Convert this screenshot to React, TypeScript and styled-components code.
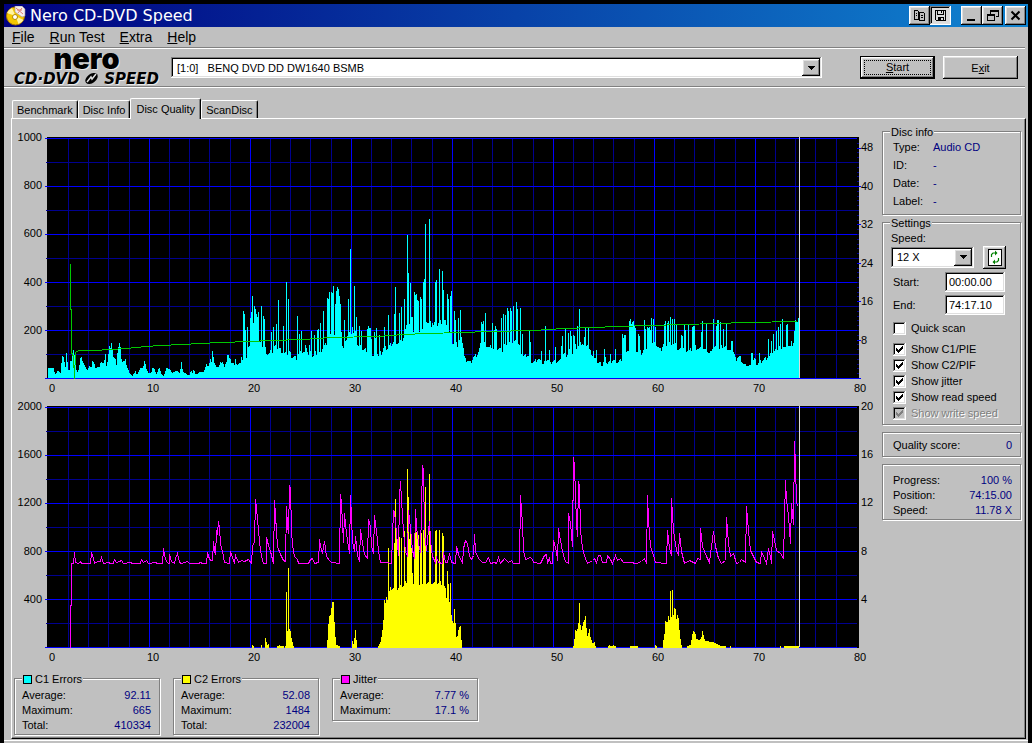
import React from 'react';
import styled, { createGlobalStyle, css } from 'styled-components';

const face = '#c0c0c0';
const shade = '#808080';
const navy = '#000080';

const raised = css`
  box-shadow: inset -1px -1px #000, inset 1px 1px #fff, inset -2px -2px ${shade}, inset 2px 2px #dfdfdf;
`;
const sunken = css`
  box-shadow: inset -1px -1px #fff, inset 1px 1px ${shade}, inset -2px -2px #dfdfdf, inset 2px 2px #000;
`;

const GlobalStyle = createGlobalStyle`
  * { box-sizing: border-box; }
  body { margin: 0; background: #000; }
  body, button, input, select {
    font-family: "Liberation Sans", Arial, sans-serif;
    font-size: 11px;
    color: #000;
  }
`;

const Desktop = styled.div`
  min-height: 100vh;
  padding: 4px 4px 0;
  display: flex;
  background: #000;
`;
const Window = styled.div`
  flex: 1;
  min-width: 0;
  display: flex;
  flex-direction: column;
  background: ${face};
`;

const TitleBar = styled.header`
  height: 23px;
  display: flex;
  align-items: center;
  padding: 0 2px;
  background: linear-gradient(to right, #000080, #1084d0);
`;
const Title = styled.h1`
  flex: 1;
  margin: 0 0 0 4px;
  font: 16px/22px "DejaVu Sans", Verdana, sans-serif;
  color: #fff;
`;
const ButtonSet = styled.div`
  display: flex;
  margin-left: ${(p: { $gap?: number }) => p.$gap ?? 0}px;
`;
const CaptionButton = styled.button<{ $pressed?: boolean }>`
  width: 21px;
  height: 19px;
  padding: 0;
  border: 0;
  display: grid;
  place-items: center;
  background: ${(p) => (p.$pressed ? '#dcdcdc' : face)};
  ${(p) => (p.$pressed ? sunken : raised)}
`;

const MenuBar = styled.nav`
  height: 20px;
  display: flex;
  gap: 15px;
  padding-left: 8px;
`;
const MenuItem = styled.button`
  padding: 0;
  border: 0;
  background: none;
  font-size: 14px;
  line-height: 18px;
`;
const Rule = styled.div`
  height: 2px;
  margin-right: 3px;
  border-top: 1px solid ${shade};
  border-bottom: 1px solid #fff;
`;

const Toolbar = styled.div`
  height: 37px;
  display: flex;
  align-items: center;
  padding: 0 10px;
`;
const Logo = styled.div`
  width: 145px;
  margin-right: 12px;
`;
const LogoName = styled.div`
  font: 900 29px/18px Inter, "DejaVu Sans", sans-serif;
  text-align: center;
  text-shadow: 1px 1px #e8e8e8;
`;
const LogoProduct = styled.div`
  display: flex;
  justify-content: space-between;
  align-items: center;
  margin-top: 4px;
  font: italic bold 15px/14px "DejaVu Sans", sans-serif;
  text-shadow: 1px 1px #e8e8e8;
`;

const SelectFrame = styled.div<{ $width?: number }>`
  display: flex;
  padding: 2px;
  height: 21px;
  background: #fff;
  ${(p) => (p.$width ? `width: ${p.$width}px;` : 'flex: 1; min-width: 0;')}
  ${sunken}
`;
const SelectControl = styled.select`
  flex: 1;
  min-width: 0;
  appearance: none;
  border: 0;
  padding: 0 0 0 4px;
  background: transparent;
  outline: 0;
`;
const SelectArrow = styled.span`
  width: 18px;
  display: grid;
  place-items: center;
  background: ${face};
  ${raised}
`;
const Actions = styled.div`
  display: flex;
  gap: 8px;
  margin-left: 38px;
`;
const PushButton = styled.button<{ $primary?: boolean }>`
  width: 75px;
  height: 23px;
  padding: ${(p) => (p.$primary ? 3 : 0)}px;
  border: ${(p) => (p.$primary ? '1px solid #000' : '0')};
  background: ${face};
  ${raised}
`;
const FocusRing = styled.span`
  display: block;
  height: 100%;
  border: 1px dotted #000;
  line-height: 13px;
`;

const Tabs = styled.div`
  display: flex;
  align-items: flex-end;
  height: 30px;
  padding-left: 8px;
`;
const Tab = styled.button<{ $active?: boolean }>`
  position: relative;
  height: ${(p) => (p.$active ? 21 : 18)}px;
  margin-bottom: ${(p) => (p.$active ? -1 : 0)}px;
  padding: 0 ${(p) => (p.$active ? 5 : 4)}px;
  line-height: 18px;
  border: 1px solid #fff;
  border-right-color: #000;
  border-bottom: 0;
  border-radius: 2px 2px 0 0;
  background: ${face};
  box-shadow: inset -1px 0 ${shade};
  z-index: ${(p) => (p.$active ? 1 : 0)};
`;

const Panel = styled.main`
  flex: 1;
  display: grid;
  grid-template-columns: minmax(0, 1fr) 139px;
  margin: 0 2px 1px 7px;
  padding: 0 4px 2px 1px;
  border: 1px solid #fff;
  border-right-color: #000;
  border-bottom-color: #000;
  box-shadow: inset -1px -1px ${shade};
`;
const BottomEdge = styled.div`
  height: 3px;
  border-top: 1px solid #fff;
`;
const Results = styled.div`
  display: flex;
  flex-direction: column;
  padding-top: 18px;
`;

const ChartFrame = styled.section`
  display: grid;
  grid-template-columns: 29px minmax(0, 1fr) 18px;
  grid-template-rows: 242px 18px;
  column-gap: 3px;
  margin-bottom: 9px;
`;
const Plot = styled.svg`
  display: block;
  width: 100%;
  height: 242px;
`;
const Scale = styled.div<{ $side: 'left' | 'right'; $top: number }>`
  display: flex;
  flex-direction: column;
  justify-content: space-between;
  height: 241px;
  padding-top: ${(p) => p.$top}px;
  margin-left: ${(p) => (p.$side === 'right' ? -3 : 0)}px;
  align-items: ${(p) => (p.$side === 'left' ? 'flex-end' : 'flex-start')};
`;
const ScaleMark = styled.span`
  height: 0;
  display: flex;
  align-items: center;
`;
const TimeScale = styled.div`
  grid-column: 2 / 4;
  display: flex;
  justify-content: space-between;
  padding-right: 15px;
`;
const TimeMark = styled.span`
  width: 14px;
  text-align: center;
  line-height: 18px;
`;

const Sidebar = styled.aside`
  display: flex;
  flex-direction: column;
  gap: 7px;
  padding-top: 12px;
`;
const Group = styled.fieldset<{ $pad: string; $width?: number }>`
  position: relative;
  min-width: 0;
  margin: 0;
  padding: ${(p) => p.$pad};
  ${(p) => (p.$width ? `width: ${p.$width}px;` : '')}
  border: 1px solid ${shade};
  box-shadow: 1px 1px #fff, inset 1px 1px #fff;
`;
const GroupTitle = styled.legend`
  position: absolute;
  top: -6px;
  left: 7px;
  padding: 0 1px;
  display: flex;
  align-items: center;
  gap: 3px;
  line-height: 13px;
  background: ${face};
`;
const Swatch = styled.span<{ $color: string }>`
  width: 9px;
  height: 9px;
  border: 1px solid #000;
  background: ${(p) => p.$color};
`;
const Facts = styled.dl<{ $line: number; $split?: boolean }>`
  display: grid;
  grid-template-columns: ${(p) => (p.$split ? 'auto 1fr' : '40px 1fr')};
  margin: 0;
  line-height: ${(p) => p.$line}px;
  dd {
    margin: 0;
    color: ${navy};
    text-align: ${(p) => (p.$split ? 'right' : 'left')};
  }
`;
const Stats = styled.div`
  display: flex;
  align-items: flex-start;
  gap: 13px;
  margin-top: 3px;
  padding-left: 1px;
`;

const SpeedLabel = styled.label`
  display: block;
  line-height: 14px;
`;
const SpeedRow = styled.div`
  display: flex;
  align-items: center;
  gap: 9px;
  height: 24px;
`;
const RefreshButton = styled.button`
  width: 23px;
  height: 23px;
  padding: 0;
  border: 0;
  display: grid;
  place-items: center;
  background: ${face};
  ${raised}
`;
const TimeRow = styled.label`
  display: grid;
  grid-template-columns: 52px 60px;
  align-items: center;
  margin-top: 3px;
  padding-left: 2px;
`;
const TimeInput = styled.input`
  width: 100%;
  height: 20px;
  padding: 0 4px;
  border: 0;
  outline: 0;
  background: #fff;
  ${sunken}
`;
const CheckList = styled.div`
  margin-top: 5px;
  padding-left: 2px;
`;
const CheckRow = styled.label<{ $disabled?: boolean }>`
  display: grid;
  grid-template-columns: 13px 1fr;
  column-gap: 5px;
  align-items: center;
  height: 16px;
  color: ${(p) => (p.$disabled ? shade : '#000')};
  text-shadow: ${(p) => (p.$disabled ? '1px 1px #fff' : 'none')};
`;
const CheckBox = styled.input`
  grid-area: 1 / 1;
  appearance: none;
  width: 13px;
  height: 13px;
  margin: 0;
  background: #fff;
  ${sunken}
  &:disabled { background: ${face}; }
`;
const CheckMark = styled.svg`
  grid-area: 1 / 1;
  width: 13px;
  height: 13px;
  pointer-events: none;
`;

/* ---------- recorded scan data ---------- */

type Point = [number, number];

// A trace is stored in thirds of a plot step, counted from its own origin.
const trace = (ox: number, oy: number, data: string): Point[] =>
  data.trim().split(/\s+/).map((pair) => {
    const [x, y] = pair.split(',').map(Number);
    return [ox + x / 3, oy + y / 3];
  });

const c1Floor: Point[] = [
  ...trace(40, 130, `24,715 40,715 44,735 52,722 60,728 64,690 67,667 70,690 75,712 79,655 82,712 86,725 90,700 97,670 100,655
  104,700 112,728 116,712 122,670 126,690 132,705 140,722 148,705 152,718 157,685 160,700 165,715 172,710 178,710 182,690
  190,700 196,675 199,715 203,678 208,645 211,668 214,615 217,675 222,688 228,700 232,655 238,640 244,690 252,697 256,690
  262,715 268,730 276,737 285,724 290,735 300,715 308,712 313,690 316,715 325,730 332,730 335,715 341,712 347,735 356,712
  362,730 370,738 378,715 388,716 395,728 403,725 412,722 418,732 424,690 427,725 437,730 446,738 452,722 457,730 460,715
  466,735 475,727 490,725 499,700 503,712 511,685 514,692 517,645 520,698 526,712 535,712 541,694 547,694 551,712 556,700
  562,667 566,685`),
  ...trace(230, 190, `0,512 8,518 12,525 16,508 19,520 26,522 30,524 34,503 38,512 46,500 49,497 52,470 58,472 61,400 64,455
  78,455 84,455 88,460 96,468 100,462 104,475 112,495 118,490 123,480 128,488 131,470 142,475 148,478 155,485 160,493
  170,492 174,495 178,485 184,502 190,500 198,505 204,492 210,488 216,485 222,488 226,468 230,470 233,513 236,460 240,490
  248,500 255,490 268,490 274,478 280,470 285,465 291,455 294,435 302,440 310,440 316,430 322,440 326,345 331,350 334,455
  338,475 342,475 346,455 350,435 356,430 362,425 370,428 376,430 380,460 386,470 392,470 398,480 410,480 414,440 422,415
  425,495 430,497 436,440 442,500 448,490 454,490 460,470 470,475 480,465 488,458 495,450 500,460 514,455 520,440 526,420
  532,405 538,405 544,400 550,430 556,435 568,430 574,420 580,400 588,390 594,400 600,398 606,410 612,400 618,410 624,400
  632,395 640,392 648,400 652,420 658,430 664,430`),
  ...trace(450, 190, `6,460 12,465 18,450 22,475 28,450 34,445 40,480 43,512 50,510 60,520 68,503 78,495 84,487 90,465
  96,450 104,460 112,470 118,475 122,465 130,480 138,475 148,478 158,485 164,455 172,460 190,455 198,455 206,465 212,485
  220,500 230,495 238,500 244,515 252,515 262,505 270,515 278,522 284,515 290,505 296,512 302,525 308,512 322,514 330,512
  338,490 346,495 354,490 360,470 366,490 374,465 380,475 386,465 394,458 402,468 410,460 416,480 424,490 432,508 440,515
  448,520 456,524 464,505 470,518 480,515 488,508 494,514 504,515 512,512 518,480 530,480 536,485 539,410 554,410 558,480
  566,485 574,488 580,478 588,470 596,470 604,455 612,460`),
  ...trace(650, 130, `14,640 20,645 26,655 32,662 38,640 44,645 50,640 68,640 76,645 82,658 90,660 96,655 104,655 112,662
  118,662 124,655 132,650 140,655 148,658 156,655 164,662 170,660 178,675 184,655 200,655 208,660 216,650 228,655 236,662
  242,668 250,665 256,692 262,678 270,685 278,700 286,710 292,708 300,705 304,690 312,688 320,702 326,698 334,692 342,688
  350,682 358,680 366,665 374,665 382,655 390,650 398,650 406,658 412,645 420,655 428,640 436,630 442,630 448,600`),
];

const c1Peaks: Point[] = [
  ...trace(40, 130, `571,690 586,688 604,682 616,600`),
  ...trace(230, 190, `40,363 43,373 46,423 52,412 61,384 64,366 67,318 70,400 73,348 76,358 79,372 82,382 85,366 94,348
  100,378 103,388 124,426 130,411 139,402 145,330 160,408 169,276 175,327 202,378 208,432 214,423 226,465 244,423 253,436
  262,420 265,417 271,399 280,363 292,324 295,328 298,306 304,306 307,310 310,288 316,342 319,303 322,291 325,298 328,318
  331,351 343,390 355,327 361,177 367,411 373,288 379,381 388,408 394,423 412,418 415,408 418,415 433,425 439,415 448,436
  463,411 475,376 493,372 496,291 508,370 514,351 523,327 529,405 532,135 535,249 541,279 544,381 547,381 553,306 556,315
  559,312 562,330 565,333 571,321 574,327 580,276 583,267 586,102 598,87 607,400 616,276 619,270 628,237 637,243 640,300
  652,312 655,327 661,318 664,303 673,363 676,390 685,384`),
  ...trace(450, 190, `25,384 31,360 34,440 95,396 98,402 101,393 107,369 128,399 134,420 137,408 140,417 155,384 161,372
  167,375 173,354 176,363 182,354 185,363 191,348 200,336 203,357 212,354 218,432 239,423 242,455 275,483 287,408 299,480
  317,472 335,468 338,438 347,415 356,430 362,423 365,438 371,435 374,438 383,408 389,357 404,440 407,415 416,415 431,483
  440,480 464,477 482,492 497,477 518,432 521,445 524,435 527,435 539,393 542,387 545,402 548,395 551,393 554,408 557,415
  566,432 569,438 584,390 587,417 593,412 596,415 599,410 602,420 605,384`),
  ...trace(650, 130, `4,564 10,567 17,590 44,583 47,573 53,579 56,573 62,561 68,567 74,567 80,582 95,615 98,617 104,582
  107,600 116,585 128,591 131,588 134,588 155,606 158,573 170,582 191,567 200,588 203,570 206,570 212,576 215,645 221,597
  230,582 245,633 248,633 305,669 308,670 329,669 356,627 365,633 371,612 380,603 386,591 392,582 398,567 410,585 413,582
  425,633 434,603 437,570 440,576 443,576 446,564`),
];

const readSpeed: Point[] = [
  [70, 263], [70, 309], [71, 309], [71, 352], [73, 356], [74, 378], [75, 352], [78, 350], [94, 350], [110, 349], [126, 348],
  [145, 346], [161, 345], [181, 344], [200, 343], [220, 342], [250, 341], [270, 340], [303, 339], [330, 337], [377, 336],
  [403, 334], [427, 333], [460, 332], [490, 331], [533, 330], [563, 328], [593, 327], [617, 326], [650, 325], [683, 324],
  [716, 323], [746, 322], [797, 321],
];

const jitter: Point[] = [
  ...trace(0, 400, `211,742 211,615 214,615 214,490 220,490 223,457 227,488 236,490 241,485 245,490 271,490 274,457 280,475
  284,490 292,484 301,484 304,472 310,490 325,486 330,490 340,490 343,478 348,488 358,484 365,481 370,490 392,487 397,490
  420,490 424,478 430,488 440,481 445,490 466,487 472,490 487,490 490,445 494,466 499,485 504,490 508,490 509,462 515,484
  522,490 527,475 532,460 538,488 545,490 563,485 568,490 595,490 601,486 606,490 619,490 622,457 626,470 632,482 637,482
  640,424 643,450 646,463 649,393 652,400 655,364 658,382 662,430 666,455 672,488 688,490`),
  ...trace(230, 400, `0,455 8,472 14,490 17,465 24,488 35,480 44,483 56,478 64,490 67,440 72,425 76,297 80,325 84,390 90,450
  96,482 100,490 109,490 110,412 116,435 122,455 130,490 133,300 137,345 142,440 150,462 160,482 166,484 169,318 173,380
  175,400 178,255 181,265 184,390 188,435 194,470 202,478 206,490 235,490 240,478 248,475 252,490 266,487 268,418 272,440
  277,460 283,425 288,470 298,480 304,488 328,490 331,283 334,310 340,428 344,340 350,400 358,460 361,285 366,425 372,455
  377,410 383,465 389,485 391,388 396,430 404,462 412,475 415,358 420,380 424,440 430,460 433,345 438,395 444,450 452,488
  470,487 485,490 490,330 494,335 498,400 505,465 508,290 511,243 515,300 520,395 526,455 532,470 535,330 540,385 546,450
  552,475 556,328 560,380 566,430 572,458 576,197 580,210 584,400 588,450 594,390 598,365 602,420 608,470 616,488 618,472
  625,488 636,490 640,458 645,488 652,488 658,460 664,488 676,490 680,440 686,462`),
  ...trace(460, 400, `6,490 11,445 16,420 22,430 28,470 34,478 40,465 43,403 47,455 54,475 66,487 76,488 84,472 90,490
  104,486 110,490 116,473 122,490 132,475 146,488 154,480 160,490 178,490 181,287 186,370 190,450 197,477 212,472 218,478
  220,488 240,490 252,465 258,464 262,488 267,475 272,490 277,490 281,420 288,455 293,480 296,385 302,420 308,455 316,485
  325,490 326,340 331,370 336,440 340,172 344,200 348,370 352,408 355,243 358,255 362,390 367,445 375,475 382,490 396,480
  402,475 410,488 416,467 422,466 428,488 438,486 443,467 450,478 456,490 465,466 472,480 482,475 490,488 510,486 530,490
  545,485 552,475 559,490 562,287 566,360 570,440 580,465 586,488 619,490 622,390 628,445 633,467 635,295 640,390 648,450
  655,465 658,400 664,455 674,490 688,480 700,488 706,490 712,475 720,478 722,385 728,440 738,470 748,488 755,440 760,395
  766,440 774,475 783,490 797,482 799,352 804,430 810,470 820,460 828,490 838,488 844,478 856,488 860,320 866,390 870,450
  880,470 888,488 900,490 905,455 912,475 920,490 925,445 930,470 934,490 937,395 944,420 950,450 960,460 970,475 976,240
  980,300 985,345 990,430 995,310 1000,372 1003,123 1007,200 1010,300 1013,318`),
];

const c2Floor: Point[] = [
  ...trace(230, 400, `64,742 67,732 70,742 90,742 92,735 97,742 102,742 104,711 107,720 110,738 113,727 116,742 132,742
  133,735 136,742 145,736 158,738 162,742 166,735 172,685 178,690 182,710 188,735 192,742 286,742 290,738 292,700 295,660
  298,645 301,655 304,598 307,605 310,607 313,700 317,733 328,740 330,742 364,742 367,715 370,740 373,700 376,693 379,725
  381,742 440,742 446,735 451,722 455,700 458,665 461,650 464,620 470,595 474,598 478,567 490,563 500,566 512,560 522,555
  530,540 536,545 540,530 546,545 550,555 560,545 568,560 578,548 600,545 612,550 624,548 636,548 642,560 646,575 650,600
  656,600 660,630 664,640 667,668 670,670 673,650 677,700 680,715 684,690 688,680 692,685 694,742`),
  ...trace(460, 400, `6,742 80,742 82,737 85,742 168,742 172,739 176,742 282,742 284,739 286,742 336,742 340,735 344,700
  347,685 350,690 353,670 356,668 361,685 365,680 368,665 371,672 374,648 377,665 380,703 383,710 386,680 389,708 393,720
  398,735 401,720 404,738 407,742 423,742 425,737 427,742 445,739 448,735 452,739 458,736 466,739 470,742 517,739 532,739
  535,742 583,742 586,732 590,742 606,742 610,712 614,690 616,650 620,668 624,648 628,670 634,640 640,645 643,620 648,650
  653,636 655,672 658,705 663,735 666,742 676,742 684,737 692,735 694,703 698,693 703,700 707,715 716,720 722,715 727,688
  730,712 735,722 748,725 760,727 775,735 785,739 794,737 800,742 807,742 809,735 812,742 955,742 960,739 964,742 976,738
  980,739 1016,739`),
];
const c2Peaks: Point[] = [
  ...trace(230, 400, `169,577 175,504 463,600 469,590 475,444 493,430 496,297 499,405 508,412 514,415 523,393 532,207
  535,290 538,418 541,380 544,445 547,520 553,405 556,400 559,397 562,405 565,405 571,450 574,400 580,390 583,388 586,262
  598,222 601,400 616,393 619,390 628,390 637,400 640,407 652,513 655,553 661,548 673,627`),
  ...trace(460, 400, `358,610 632,573 637,570`),
];

// Turns the floor and the peaks into one column of bars per plot step.
const barPath = (floor: Point[], peaks: Point[], zero: number): string => {
  const tops = new Map<number, number>();
  for (let i = 0; i < floor.length - 1; i += 1) {
    const [x1, y1] = floor[i];
    const [x2, y2] = floor[i + 1];
    for (let x = Math.ceil(x1); x < x2; x += 1) {
      const wobble = zero - y1 > 12 ? ((x * 7919) % 5) - 2 : 0;
      tops.set(x, Math.round(y1 + ((y2 - y1) * (x - x1)) / (x2 - x1)) + wobble);
    }
  }
  peaks.forEach(([px, py]) => {
    const x = Math.floor(px);
    tops.set(x, Math.min(tops.get(x) ?? zero, Math.round(py)));
  });
  let d = '';
  tops.forEach((y, x) => {
    if (y < zero) d += `M${x} ${zero + 1}V${y}h1V${zero + 1}z`;
  });
  return d;
};

const linePath = (points: Point[]): string =>
  points.map(([x, y], i) => `${i ? 'L' : 'M'}${Math.floor(x)}.5 ${Math.floor(y)}.5`).join('');

const range = (n: number) => Array.from({ length: n }, (_, i) => i);

interface ChartProps {
  name: string;
  top: number;
  left: string[];
  right: string[];
  rightInset: number;
  speedTicks?: boolean;
  children: React.ReactNode;
}

const Chart = ({ name, top, left, right, rightInset, speedTicks, children }: ChartProps) => (
  <ChartFrame aria-label={name}>
    <Scale $side="left" $top={0}>
      {left.map((t, i) => <ScaleMark key={i}>{t}</ScaleMark>)}
    </Scale>
    <Plot viewBox={`45 ${top} 816 242`} preserveAspectRatio="none" shapeRendering="crispEdges">
      <rect x="47" y={top} width="812" height="242" fill="#000" />
      {range(5).map((i) => (
        <rect key={`m${i}`} x="46" y={top + 25 + i * 48} width="811" height="1" fill="#000090" />
      ))}
      {range(41).map((i) => (
        i % 5 === 0 ? null : (
          <rect key={`v${i}`} x={Math.floor(48.2 + i * 20.2)} y={top + 1} width="1" height="240" fill="#000090" />
        )
      ))}
      {range(7).map((i) => (
        <rect key={`V${i}`} x={149 + i * 101} y={top + 1} width="1" height="240" fill="#0000ff" />
      ))}
      {range(6).map((i) => (
        <rect key={`h${i}`} x="45" y={top + 1 + i * 48} width="812" height="1" fill="#0000ff" />
      ))}
      {speedTicks && range(50).map((i) => (
        <rect
          key={`t${i}`}
          x="857"
          y={Math.round(top + 241 - i * 4.8)}
          width={i % 8 === 0 ? 4 : 2}
          height="1"
          fill={i % 8 === 0 ? '#0000ff' : '#000090'}
        />
      ))}
      {children}
      <rect x="799" y={top} width="1" height="241" fill="#dcdcdc" />
    </Plot>
    <Scale $side="right" $top={rightInset}>
      {right.map((t, i) => <ScaleMark key={i}>{t}</ScaleMark>)}
    </Scale>
    <TimeScale>
      {range(9).map((i) => <TimeMark key={i}>{i * 10}</TimeMark>)}
    </TimeScale>
  </ChartFrame>
);

const Arrow = () => (
  <svg width="7" height="4" viewBox="0 0 7 4" shapeRendering="crispEdges"><path d="M0 0h7v1H0zM1 1h5v1H1zM2 2h3v1H2zM3 3h1v1H3z" /></svg>
);

interface StatsGroupProps {
  title: string;
  color: string;
  rows: [string, string][];
  pad: string;
}
const StatsGroup = ({ title, color, rows, pad }: StatsGroupProps) => (
  <Group $pad={pad} $width={146}>
    <GroupTitle><Swatch $color={color} />{title}</GroupTitle>
    <Facts $line={15} $split>
      {rows.map(([k, v]) => (
        <React.Fragment key={k}><dt>{k}</dt><dd>{v}</dd></React.Fragment>
      ))}
    </Facts>
  </Group>
);

interface CheckProps {
  label: string;
  checked?: boolean;
  disabled?: boolean;
}
const Check = ({ label, checked = false, disabled = false }: CheckProps) => {
  const [on, setOn] = React.useState(checked);
  return (
    <CheckRow $disabled={disabled}>
      <CheckBox type="checkbox" checked={on} disabled={disabled} onChange={() => setOn(!on)} />
      {on && (
        <CheckMark viewBox="0 0 13 13" shapeRendering="crispEdges">
          <path d="M3 5h1v3H3zM4 6h1v3H4zM5 7h1v3H5zM6 6h1v3H6zM7 5h1v3H7zM8 4h1v3H8zM9 3h1v3H9z" fill={disabled ? shade : '#000'} />
        </CheckMark>
      )}
      <span>{label}</span>
    </CheckRow>
  );
};

export default function App() {
  return (
    <>
      <GlobalStyle />
      <Desktop>
        <Window>
          <TitleBar>
            <svg width="20" height="20" viewBox="0 0 20 20" aria-hidden="true">
              <circle cx="9.5" cy="10" r="9" fill="#f5c800" stroke="#a87800" />
              <path d="M9.500 10L1 7a9 9 0 0 1 5-5z" fill="#fff3a0" />
              <path d="M9.500 10l8 4a9 9 0 0 1-5 4z" fill="#fff3a0" />
              <circle cx="9" cy="11" r="2.500" fill="#fff" stroke="#b08a00" />
              <path d="M9 0h7l3 3v7l-3 1-7-5z" fill="#f4eeee" stroke="#a09090" strokeWidth="0.6" />
              <path d="M10 2l7 6M12 7l4-5M11 4h5" stroke="#e08070" strokeWidth="1" />
            </svg>
            <Title>Nero CD-DVD Speed</Title>
            <ButtonSet>
              <CaptionButton aria-label="Copy">
                <svg width="13" height="13" viewBox="0 0 13 13" shapeRendering="crispEdges" fill="none" stroke="#000">
                  <path d="M1.500 1.500h3l1 1v8h-4zM6.500 3.500h4l1 1v7h-5zM3 4.500h1M3 6.500h1M8 6.500h2M8 8.500h2" />
                </svg>
              </CaptionButton>
              <CaptionButton aria-label="Save" $pressed>
                <svg width="13" height="13" viewBox="0 0 13 13" shapeRendering="crispEdges" fill="none" stroke="#000">
                  <path d="M1.500 1.500h10v10h-9l-1-1zM3.500 1.500v4h6v-4M4.500 11.500v-3h5v3M7.500 2v2" />
                  <path d="M5 9h2v3H5z" fill="#000" stroke="none" />
                </svg>
              </CaptionButton>
            </ButtonSet>
            <ButtonSet $gap={10}>
              <CaptionButton aria-label="Minimize">
                <svg width="13" height="13" viewBox="0 0 13 13" shapeRendering="crispEdges"><path d="M2 10h8v2H2z" /></svg>
              </CaptionButton>
              <CaptionButton aria-label="Restore">
                <svg width="13" height="13" viewBox="0 0 13 13" shapeRendering="crispEdges">
                  <path d="M4 1h9v7h-3V7h2V3H5v2H4zM1 5h8v7H1zm1 2v4h6V7z" fillRule="evenodd" />
                </svg>
              </CaptionButton>
            </ButtonSet>
            <ButtonSet $gap={2}>
              <CaptionButton aria-label="Close">
                <svg width="13" height="13" viewBox="0 0 13 13"><path d="M2.500 2.500l8 8M10.500 2.500l-8 8" stroke="#000" strokeWidth="2" /></svg>
              </CaptionButton>
            </ButtonSet>
          </TitleBar>

          <MenuBar>
            <MenuItem><u>F</u>ile</MenuItem>
            <MenuItem><u>R</u>un Test</MenuItem>
            <MenuItem><u>E</u>xtra</MenuItem>
            <MenuItem><u>H</u>elp</MenuItem>
          </MenuBar>
          <Rule />

          <Toolbar>
            <Logo>
              <LogoName>nero</LogoName>
              <LogoProduct>
                <span>CD·DVD</span>
                <svg width="17" height="13" viewBox="0 0 17 13" aria-hidden="true">
                  <ellipse cx="8.500" cy="6.500" rx="7" ry="4.500" transform="rotate(-38 8.500 6.500)" fill="#000" />
                  <path d="M4 10L8 5l1 2 4-5" stroke="#e0e0e0" strokeWidth="1.500" fill="none" />
                </svg>
                <span>SPEED</span>
              </LogoProduct>
            </Logo>
            <SelectFrame>
              <SelectControl aria-label="Drive">
                <option>{'[1:0]\u00a0\u00a0\u00a0BENQ DVD DD DW1640 BSMB'}</option>
              </SelectControl>
              <SelectArrow><Arrow /></SelectArrow>
            </SelectFrame>
            <Actions>
              <PushButton $primary><FocusRing><u>S</u>tart</FocusRing></PushButton>
              <PushButton>E<u>x</u>it</PushButton>
            </Actions>
          </Toolbar>
          <Rule />

          <Tabs role="tablist">
            <Tab role="tab">Benchmark</Tab>
            <Tab role="tab">Disc Info</Tab>
            <Tab role="tab" aria-selected $active>Disc Quality</Tab>
            <Tab role="tab">ScanDisc</Tab>
          </Tabs>

          <Panel>
            <Results>
              <Chart
                name="C1 errors and read speed"
                top={137}
                left={['1000', '800', '600', '400', '200', '']}
                right={['48', '40', '32', '24', '16', '8', '']}
                rightInset={10}
                speedTicks
              >
                <path d={barPath(c1Floor, c1Peaks, 377)} fill="#00ffff" />
                <path d={linePath(readSpeed)} fill="none" stroke="#00c800" />
              </Chart>
              <Chart
                name="C2 errors and jitter"
                top={406}
                left={['2000', '1600', '1200', '800', '400', '']}
                right={['20', '16', '12', '8', '4', '']}
                rightInset={0}
              >
                <path d={barPath(c2Floor, c2Peaks, 647)} fill="#ffff00" />
                <path d={linePath(jitter)} fill="none" stroke="#ff00ff" />
              </Chart>
              <Stats>
                <StatsGroup
                  title="C1 Errors"
                  color="#00ffff"
                  pad="9px 8px 1px 7px"
                  rows={[['Average:', '92.11'], ['Maximum:', '665'], ['Total:', '410334']]}
                />
                <StatsGroup
                  title="C2 Errors"
                  color="#ffff00"
                  pad="9px 8px 1px 7px"
                  rows={[['Average:', '52.08'], ['Maximum:', '1484'], ['Total:', '232004']]}
                />
                <StatsGroup
                  title="Jitter"
                  color="#ff00ff"
                  pad="9px 8px 2px 7px"
                  rows={[['Average:', '7.77 %'], ['Maximum:', '17.1 %']]}
                />
              </Stats>
            </Results>

            <Sidebar>
              <Group $pad="6px 4px 4px 10px">
                <GroupTitle>Disc info</GroupTitle>
                <Facts $line={18}>
                  <dt>Type:</dt><dd>Audio CD</dd>
                  <dt>ID:</dt><dd>-</dd>
                  <dt>Date:</dt><dd>-</dd>
                  <dt>Label:</dt><dd>-</dd>
                </Facts>
              </Group>

              <Group $pad="8px 4px 3px 8px">
                <GroupTitle>Settings</GroupTitle>
                <SpeedLabel htmlFor="speed">Speed:</SpeedLabel>
                <SpeedRow>
                  <SelectFrame $width={83}>
                    <SelectControl id="speed"><option>12 X</option></SelectControl>
                    <SelectArrow><Arrow /></SelectArrow>
                  </SelectFrame>
                  <RefreshButton aria-label="Refresh">
                    <svg width="14" height="17" viewBox="0 0 14 17">
                      <rect x="0.500" y="0.500" width="13" height="16" fill="#fff" stroke="#000" />
                      <path d="M3.500 8V5.500L5 4h3M10.500 9v2.500L9 13H6" fill="none" stroke="#008000" strokeWidth="1.200" />
                      <path d="M7 1.500l2.500 2.500L7 6.500zM7 10.500L4.500 13 7 15.500z" fill="#008000" />
                    </svg>
                  </RefreshButton>
                </SpeedRow>
                <TimeRow>Start:<TimeInput defaultValue="00:00.00" /></TimeRow>
                <TimeRow>End:<TimeInput defaultValue="74:17.10" /></TimeRow>
                <CheckList>
                  <Check label="Quick scan" />
                </CheckList>
                <CheckList>
                  <Check label="Show C1/PIE" checked />
                  <Check label="Show C2/PIF" checked />
                  <Check label="Show jitter" checked />
                  <Check label="Show read speed" checked />
                  <Check label="Show write speed" checked disabled />
                </CheckList>
              </Group>

              <Group $pad="4px 8px 3px 10px">
                <Facts $line={16} $split><dt>Quality score:</dt><dd>0</dd></Facts>
              </Group>

              <Group $pad="8px 8px 1px 10px">
                <Facts $line={15} $split>
                  <dt>Progress:</dt><dd>100 %</dd>
                  <dt>Position:</dt><dd>74:15.00</dd>
                  <dt>Speed:</dt><dd>11.78 X</dd>
                </Facts>
              </Group>
            </Sidebar>
          </Panel>
          <BottomEdge />
        </Window>
      </Desktop>
    </>
  );
}
